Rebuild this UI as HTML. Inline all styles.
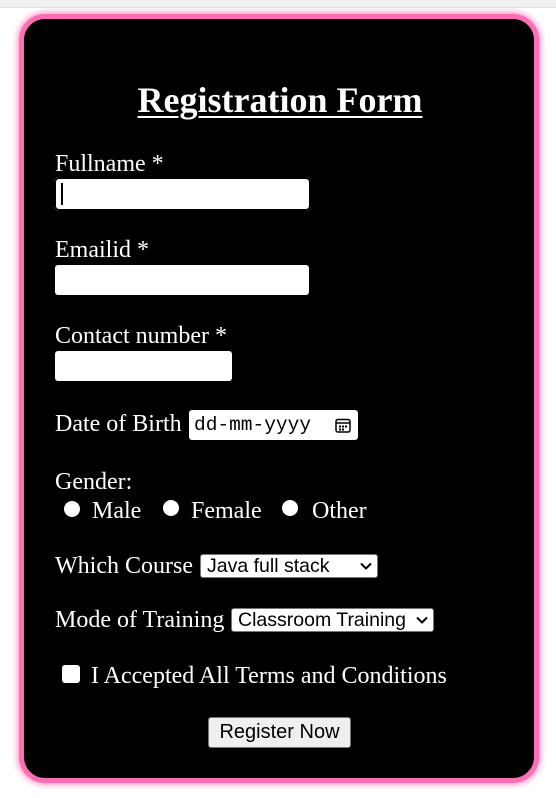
<!DOCTYPE html>
<html><head><style>
body{margin:0;width:556px;height:798px;background:#fff;position:relative;overflow:hidden;font-family:"Liberation Serif",serif;color:#fff}
.strip{position:absolute;left:0;top:0;width:556px;height:7px;background:#f0f0f0;border-bottom:1px solid #e2e2e2}
.card{position:absolute;left:19px;top:14px;width:510px;height:759px;background:#000;border:5px solid #ff6eb4;border-radius:26px;box-shadow:0 0 6px 2px #ff9ccc}
.t{position:absolute;font-size:24px;line-height:24px;white-space:nowrap}
h1{position:absolute;margin:0;left:0;width:560px;text-align:center;top:80px;font-size:36px;line-height:40px;font-weight:bold;text-decoration:underline;text-decoration-thickness:2px;text-underline-offset:4px}
.in{position:absolute;background:#fff;border-radius:3px}
.sel{position:absolute;background:#fff;border:1px solid #767676;border-radius:3px;color:#000;font-family:"Liberation Sans",sans-serif;font-size:19.5px;line-height:22px;padding-left:6px;box-sizing:border-box;white-space:nowrap}
.sel svg{position:absolute;right:5px;top:7px}
.radio{position:absolute;width:16px;height:16px;border-radius:50%;background:#fff}
</style></head><body>
<div class="strip"></div>
<div class="card"></div>
<h1>Registration Form</h1>
<div class="t" style="left:55px;top:152px">Fullname *</div>
<div class="in" style="left:54px;top:177px;width:257px;height:34px;border-radius:5px;background:#fff;box-shadow:inset 0 0 0 2px #000,inset 0 0 0 1px #fff"></div>
<div style="position:absolute;left:61px;top:183px;width:2px;height:22px;background:#000"></div>
<div class="t" style="left:55px;top:238px">Emailid *</div>
<div class="in" style="left:55px;top:265px;width:254px;height:30px"></div>
<div class="t" style="left:55px;top:324px">Contact number *</div>
<div class="in" style="left:55px;top:351px;width:177px;height:30px"></div>
<div class="t" style="left:55px;top:412px">Date of Birth</div>
<div class="in" style="left:189px;top:410px;width:169px;height:30px;color:#000;font-family:'Liberation Mono',monospace;font-size:19.5px;line-height:30px;padding-left:5px;box-sizing:border-box">dd-mm-yyyy
<svg style="position:absolute;right:7px;top:8px" width="16" height="15" viewBox="0 0 16 15"><rect x="1" y="1.5" width="14" height="12.5" rx="2" fill="none" stroke="#000" stroke-width="1.5"/><line x1="1" y1="5" x2="15" y2="5" stroke="#000" stroke-width="1.5"/><rect x="4" y="7.5" width="2" height="2" fill="#000"/><rect x="7" y="7.5" width="2" height="2" fill="#000"/><rect x="10" y="7.5" width="2" height="2" fill="#000"/><rect x="4" y="10.5" width="2" height="2" fill="#000"/><rect x="7" y="10.5" width="2" height="2" fill="#000"/></svg></div>
<div class="t" style="left:55px;top:470px">Gender:</div>
<div class="radio" style="left:64px;top:501px"></div><div class="t" style="left:92px;top:499px">Male</div>
<div class="radio" style="left:163px;top:500px"></div><div class="t" style="left:191px;top:499px">Female</div>
<div class="radio" style="left:282px;top:500px"></div><div class="t" style="left:312px;top:499px">Other</div>
<div class="t" style="left:55px;top:554px">Which Course</div>
<div class="sel" style="left:200px;top:554px;width:178px;height:24px">Java full stack<svg width="12" height="8" viewBox="0 0 12 8"><path d="M1 1.5l5 5 5-5" fill="none" stroke="#000" stroke-width="2"/></svg></div>
<div class="t" style="left:55px;top:608px">Mode of Training</div>
<div class="sel" style="left:231px;top:608px;width:203px;height:24px">Classroom Training<svg style="background:#fff" width="12" height="8" viewBox="0 0 12 8"><path d="M1 1.5l5 5 5-5" fill="none" stroke="#000" stroke-width="2"/></svg></div>
<div style="position:absolute;left:62px;top:665px;width:18px;height:18px;background:#fff;border-radius:3px"></div>
<div class="t" style="left:91px;top:664px">I Accepted All Terms and Conditions</div>
<div style="position:absolute;left:208px;top:717px;width:143px;height:31px;background:#efefef;border:1px solid #767676;border-radius:3px;box-sizing:border-box;color:#000;font-family:'Liberation Sans',sans-serif;font-size:20px;line-height:29px;text-align:center">Register Now</div>
</body></html>
